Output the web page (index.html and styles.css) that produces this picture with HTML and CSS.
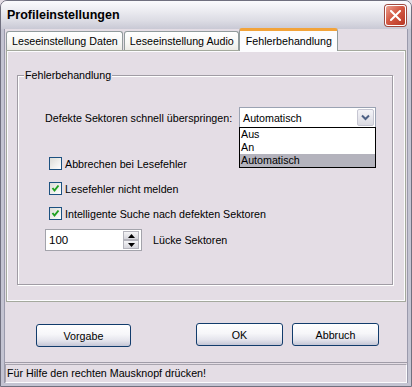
FILE: index.html
```html
<!DOCTYPE html>
<html lang="de">
<head>
  <meta charset="UTF-8" />
  <title>Profileinstellungen</title>
  <link rel="stylesheet" href="styles.css">
</head>
<body>

  <div class="window">
    <!-- Titelleiste -->
    <div class="titlebar">
      <span class="title">Profileinstellungen</span>
      <button class="close">
        <svg width="11" height="11" viewBox="0 0 11 11"><path d="M1 1 L10 10 M10 1 L1 10" stroke="#fff" stroke-width="2" stroke-linecap="square"/></svg>
      </button>
    </div>

    <div class="client">
      <!-- Reiter -->
      <div class="tabs">
        <div class="tab">Leseeinstellung Daten</div>
        <div class="tab">Leseeinstellung Audio</div>
        <div class="tab active">Fehlerbehandlung</div>
      </div>

      <div class="panel">
        <fieldset class="group">
          <legend>Fehlerbehandlung</legend>

          <div class="row-select">
            <span class="row-label">Defekte Sektoren schnell überspringen:</span>
            <div class="combo">
              <div class="combo-field">
                <span class="combo-value">Automatisch</span>
                <span class="combo-btn">
                  <svg width="9" height="7" viewBox="0 0 9 7"><path d="M1 1.5 L4.5 5 L8 1.5" fill="none" stroke="#4d6185" stroke-width="2"/></svg>
                </span>
              </div>
              <ul class="combo-list">
                <li>Aus</li>
                <li>An</li>
                <li class="sel">Automatisch</li>
              </ul>
            </div>
          </div>

          <div class="checks">
            <label class="check"><span class="box"></span>Abbrechen bei Lesefehler</label>
            <label class="check"><span class="box on"><svg width="11" height="11" viewBox="0 0 11 11"><path d="M2.5 5 L4.5 7.5 L8.5 2.5" fill="none" stroke="#21a121" stroke-width="2"/></svg></span>Lesefehler nicht melden</label>
            <label class="check"><span class="box on"><svg width="11" height="11" viewBox="0 0 11 11"><path d="M2.5 5 L4.5 7.5 L8.5 2.5" fill="none" stroke="#21a121" stroke-width="2"/></svg></span>Intelligente Suche nach defekten Sektoren</label>
          </div>

          <div class="spin-row">
            <div class="spin">
              <span class="spin-value">100</span>
              <span class="spin-btns">
                <span class="spin-up"><svg width="7" height="4" viewBox="0 0 7 4"><path d="M0 4 L3.5 0 L7 4 Z" fill="#000"/></svg></span>
                <span class="spin-down"><svg width="7" height="4" viewBox="0 0 7 4"><path d="M0 0 L3.5 4 L7 0 Z" fill="#000"/></svg></span>
              </span>
            </div>
            <span>Lücke Sektoren</span>
          </div>
        </fieldset>
      </div>

      <!-- Schaltflächen -->
      <div class="buttons">
        <button class="btn btn-default">Vorgabe</button>
        <button class="btn btn-ok">OK</button>
        <button class="btn">Abbruch</button>
      </div>

      <div class="status">
        <div class="status-inner">Für Hilfe den rechten Mausknopf drücken!</div>
      </div>
    </div>
  </div>

</body>
</html>
```

FILE: styles.css
```css
/* Grundlayout */
html, body {
  margin: 0; padding: 0;
  width: 412px; height: 387px;
  background: #e4dde5;
  font-family: "Liberation Sans", Arial, sans-serif;
  font-size: 10.7px;
  color: #000;
  overflow: hidden;
}

/* Fensterrahmen */
.window {
  box-sizing: border-box;
  width: 412px; height: 387px;
  display: flex; flex-direction: column;
  border: 1px solid #70707f;
  border-radius: 7px 7px 0 0;
  background: #e4dde5;
  overflow: hidden;
}

/* Titelleiste */
.titlebar {
  height: 28px;
  flex: none;
  display: flex; align-items: center;
  justify-content: space-between;
  padding: 0 5px 0 6px;
  background: linear-gradient(#fbfbfd, #ececf1 35%, #dcdce4 70%, #c9c9d5);
}
.title {
  font-size: 12.5px;
  font-weight: bold;
}
.close {
  box-sizing: border-box;
  width: 21px; height: 21px;
  padding: 0;
  margin-top: 1px;
  display: flex; align-items: center; justify-content: center;
  border: 1px solid #fff;
  border-radius: 3px;
  background: linear-gradient(135deg, #eaa090, #d45a44 45%, #b83624);
  box-shadow: 0 0 0 1px #a04a40;
}

/* Client-Bereich */
.client {
  flex: 1;
  display: flex; flex-direction: column;
  border: 3px solid #c4c4d2;
  border-top: 0;
  box-shadow: inset 1px 0 #9a9aac, inset -1px 0 #9a9aac, inset 0 -1px #9a9aac;
}

/* Reiter */
.tabs {
  display: flex;
  align-items: flex-end;
  height: 21px;
  padding-left: 2px;
  position: relative;
  z-index: 1;
}
.tab {
  box-sizing: border-box;
  height: 19px;
  line-height: 18px;
  padding: 0 4px 0 5px;
  margin-right: 1px;
  border: 1px solid #919b9c;
  border-bottom: 0;
  border-radius: 3px 3px 0 0;
  background: linear-gradient(#ffffff, #f7f7f5 60%, #ecebe6);
}
.tab.active {
  height: 23px;
  line-height: 20px;
  margin: 0 0 -1px -1px;
  padding: 0 5px 0 6px;
  border-top: 3px solid #f2a33a;
  background: #fcfcfe;
}

/* Reiter-Seite */
.panel {
  box-sizing: border-box;
  height: 252px;
  margin: 0 2px;
  padding: 18px 12px 16px 10px;
  display: flex;
  border: 1px solid #a4a99d;
  box-shadow: inset 1px 1px #fcfcfe, inset -1px -1px #fcfcfe;
  background: #e4dde5;
}

/* Gruppenrahmen */
.group {
  flex: 1;
  margin: 0;
  padding: 0 0 0 27px;
  min-width: 0;
  border: 1px solid #a09ca4;
  box-shadow: inset 1px 1px #fff, 1px 1px #fff;
}
.group legend {
  padding: 0 1px;
  margin-left: -21px;
  line-height: 13px;
  background: #e4dde5;
}

/* Auswahlzeile */
.row-select {
  display: flex; align-items: center;
  margin-top: 25px;
  height: 21px;
}
.row-label {
  width: 194px;
}
.combo {
  position: relative;
  width: 137px;
}
.combo-field {
  box-sizing: border-box;
  height: 21px;
  display: flex; align-items: center;
  justify-content: space-between;
  padding: 0 1px 0 3px;
  border: 1px solid #9aa2b2;
  background: #fff;
}
.combo-btn {
  box-sizing: border-box;
  width: 17px; height: 17px;
  display: flex; align-items: center; justify-content: center;
  border: 1px solid #c6c6d2;
  border-radius: 2px;
  background: linear-gradient(#f4f4f8, #dadae2);
}
.combo-list {
  position: absolute;
  top: 20px; left: 0;
  box-sizing: border-box;
  width: 137px;
  margin: 0; padding: 0;
  list-style: none;
  border: 1px solid #000;
  background: #fff;
  z-index: 2;
}
.combo-list li {
  height: 13px;
  line-height: 13px;
  padding-left: 1px;
}
.combo-list li.sel {
  background: #b4b3bd;
}

/* Kontrollkästchen */
.checks {
  display: flex; flex-direction: column;
  gap: 12px;
  margin-top: 29px;
  padding-left: 4px;
}
.check {
  display: flex; align-items: center;
  gap: 3px;
  height: 13px;
}
.box {
  box-sizing: border-box;
  width: 13px; height: 13px;
  display: flex; align-items: center; justify-content: center;
  border: 1px solid #1c5180;
  background: linear-gradient(135deg, #dcdcd7, #f5f5f3 70%, #fff);
}

/* Drehfeld */
.spin-row {
  display: flex; align-items: center;
  gap: 11px;
  margin-top: 9px;
}
.spin {
  box-sizing: border-box;
  width: 97px; height: 22px;
  display: flex; align-items: center;
  justify-content: space-between;
  padding: 1px 2px 1px 3px;
  border: 1px solid #a3a3ab;
  background: #fff;
}
.spin-value {
  font-size: 11.5px;
}
.spin-btns {
  display: flex; flex-direction: column;
  width: 16px; height: 18px;
}
.spin-up, .spin-down {
  box-sizing: border-box;
  flex: 1;
  display: flex; align-items: center; justify-content: center;
  border: 1px solid #b4b4bc;
  background: linear-gradient(#f4f4f6, #d6d6dc);
}

/* Schaltflächen unten */
.buttons {
  display: flex;
  align-items: flex-start;
  height: 60px;
  padding: 21px 0 0 32px;
  box-sizing: border-box;
}
.btn {
  box-sizing: border-box;
  width: 87px; height: 23px;
  padding: 0;
  margin-right: 9px;
  font-family: "Liberation Sans", Arial, sans-serif;
  font-size: 10.7px;
  color: #000;
  border: 1px solid #123c6c;
  border-radius: 3px;
  background: linear-gradient(#ffffff, #f6f6f9 45%, #e4e4ec 75%, #c4c6d6);
}
.btn-default {
  width: 95px;
  margin-top: 1px;
  margin-right: 65px;
}

/* Statusleiste */
.status {
  flex: 1;
  border-top: 1px solid #a09ca8;
  padding: 1px 1px 0 1px;
}
.status-inner {
  box-sizing: border-box;
  height: 19px;
  line-height: 17px;
  padding-left: 1px;
  border: 1px solid;
  border-color: #a8a4ae #fbfbfd #fbfbfd #a8a4ae;
}
```
